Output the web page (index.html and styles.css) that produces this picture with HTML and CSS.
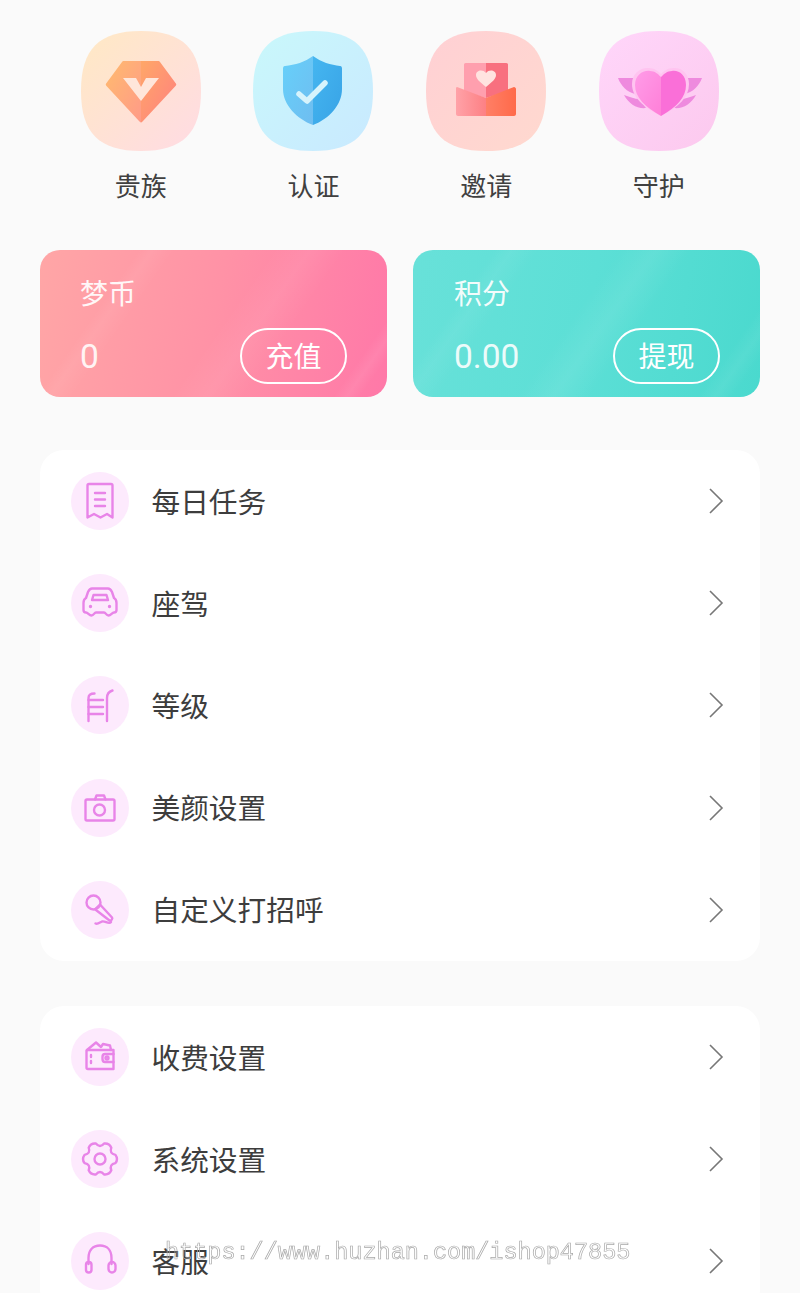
FILE: index.html
```html
<!DOCTYPE html>
<html lang="zh-CN">
<head>
  <meta charset="UTF-8">
  <title>我的</title>
  <link rel="stylesheet" href="styles.css">
</head>
<body>
<div class="page">

  <svg class="defs" width="0" height="0">
    <defs>
      <linearGradient id="t1" x1="0" y1="0" x2="1" y2="1"><stop offset="0" stop-color="#ffe9c4"/><stop offset="1" stop-color="#ffdbe4"/></linearGradient>
      <linearGradient id="t2" x1="0" y1="0" x2="1" y2="1"><stop offset="0" stop-color="#c9f8fb"/><stop offset="1" stop-color="#c9e9ff"/></linearGradient>
      <linearGradient id="t3" x1="0" y1="0" x2="1" y2="1"><stop offset="0" stop-color="#ffd0d4"/><stop offset="1" stop-color="#ffd9cf"/></linearGradient>
      <linearGradient id="t4" x1="0" y1="0" x2="1" y2="1"><stop offset="0" stop-color="#ffd6fa"/><stop offset="1" stop-color="#fcc9ee"/></linearGradient>
      <linearGradient id="d1" x1="0" y1="0" x2="1" y2="1"><stop offset="0" stop-color="#ffbb6e"/><stop offset="1" stop-color="#ff9a88"/></linearGradient>
      <linearGradient id="d2" x1="0" y1="0" x2="1" y2="1"><stop offset="0" stop-color="#ffa768"/><stop offset="1" stop-color="#ff7f80"/></linearGradient>
      <linearGradient id="s1" x1="0" y1="0" x2="1" y2="1"><stop offset="0" stop-color="#66d0fa"/><stop offset="1" stop-color="#6fbdf0"/></linearGradient>
      <linearGradient id="s2" x1="0" y1="0" x2="1" y2="1"><stop offset="0" stop-color="#45b6f0"/><stop offset="1" stop-color="#38a3e6"/></linearGradient>
      <linearGradient id="i1" x1="0" y1="0" x2="1" y2="0"><stop offset="0" stop-color="#ffa2a8"/><stop offset="1" stop-color="#fd8084"/></linearGradient>
      <linearGradient id="i2" x1="0" y1="0" x2="1" y2="0"><stop offset="0" stop-color="#ff7f66"/><stop offset="1" stop-color="#ff6a4a"/></linearGradient>
      <linearGradient id="h1" x1="0" y1="0" x2="1" y2="1"><stop offset="0" stop-color="#ff9ce8"/><stop offset="1" stop-color="#ff7fd8"/></linearGradient>
    </defs>
  </svg>

  <div class="shortcuts">
    <div class="shortcut">
      <svg class="tile" viewBox="0 0 120 120">
        <path fill="url(#t1)" d="M60 0C102 0 120 18 120 60C120 102 102 120 60 120C18 120 0 102 0 60C0 18 18 0 60 0Z"/>
        <path fill="url(#d1)" d="M60 30H43C42 30 41.500 30 41 31L25.500 52C24.500 53 24.500 54 25.500 55L58 90C59 91 60 91.500 60 91.500Z"/>
        <path fill="url(#d2)" d="M60 30H77C78 30 78.500 30 79 31L94.500 52C95.500 53 95.500 54 94.500 55L62 90C61 91 60 91.500 60 91.500Z"/>
        <path fill="#ffe6da" d="M42 47H55L60 56L65 47H78L60 70Z"/>
      </svg>
      <span>贵族</span>
    </div>
    <div class="shortcut">
      <svg class="tile" viewBox="0 0 120 120">
        <path fill="url(#t2)" d="M60 0C102 0 120 18 120 60C120 102 102 120 60 120C18 120 0 102 0 60C0 18 18 0 60 0Z"/>
        <path fill="url(#s1)" d="M60 25C52 31 42 34 32 35C30 35 30 37 30 38V58C30 74 44 88 60 94Z"/>
        <path fill="url(#s2)" d="M60 25C68 31 78 34 87 35C89 35 89 37 89 38V58C89 74 76 88 60 94Z"/>
        <path fill="none" stroke="#d6f3fc" stroke-width="5.5" stroke-linecap="round" stroke-linejoin="round" d="M46 63L54 70L72 52"/>
      </svg>
      <span>认证</span>
    </div>
    <div class="shortcut">
      <svg class="tile" viewBox="0 0 120 120">
        <path fill="url(#t3)" d="M60 0C102 0 120 18 120 60C120 102 102 120 60 120C18 120 0 102 0 60C0 18 18 0 60 0Z"/>
        <path fill="#ff9fae" d="M60 32H40C38 32 38 33 38 34V60L60 67Z"/>
        <path fill="#f8707f" d="M60 32H80C82 32 82 33 82 34V60L60 67Z"/>
        <path fill="#ffe3e0" d="M60 56C54 51 50 48 50 44C50 39 57 38 60 42C63 38 70 39 70 44C70 48 66 51 60 56Z"/>
        <path fill="url(#i1)" d="M60 67L31 56C30 56 30 57 30 58V83C30 84 31 85 32 85H60Z"/>
        <path fill="url(#i2)" d="M60 67L88 56C89 56 90 57 90 58V83C90 84 89 85 88 85H60Z"/>
      </svg>
      <span>邀请</span>
    </div>
    <div class="shortcut">
      <svg class="tile" viewBox="0 0 120 120">
        <path fill="url(#t4)" d="M60 0C102 0 120 18 120 60C120 102 102 120 60 120C18 120 0 102 0 60C0 18 18 0 60 0Z"/>
        <path fill="#ee8ade" d="M19 47H35C33 53 34 58 36 63C28 61 22 55 19 47Z"/>
        <path fill="#ee8ade" d="M25 64C31 66 36 68 40 68L47 77C38 78 30 73 25 64Z"/>
        <path fill="#ee8ade" d="M103 47H87C89 53 88 58 86 63C94 61 100 55 103 47Z"/>
        <path fill="#ee8ade" d="M97 64C91 66 86 68 82 68L75 77C84 78 92 73 97 64Z"/>
        <path fill="#ffc4f0" d="M62 85C44 76 33 66 33 53C33 42 42 36 50 37C55 37 59 40 62 43C65 40 69 37 74 37C82 36 90 42 90 53C90 66 80 76 62 85Z"/>
        <path fill="url(#h1)" d="M62 85C46 76 36 66 36 54C36 44 44 39 51 40C56 40 59 43 62 46Z"/>
        <path fill="#fa6fd8" d="M62 85C78 76 87 66 87 54C87 44 80 39 73 40C68 40 65 43 62 46Z"/>
      </svg>
      <span>守护</span>
    </div>
  </div>

  <div class="wallets">
    <div class="wallet wallet-pink">
      <div class="wallet-name">梦币</div>
      <div class="wallet-row">
        <span class="wallet-num">0</span>
        <span class="wallet-btn">充值</span>
      </div>
    </div>
    <div class="wallet wallet-teal">
      <div class="wallet-name">积分</div>
      <div class="wallet-row">
        <span class="wallet-num">0.00</span>
        <span class="wallet-btn">提现</span>
      </div>
    </div>
  </div>

  <div class="menu">
    <div class="menu-row">
      <svg class="menu-icon" viewBox="0 0 58 58">
        <path d="M18 12H40C41 12 41.500 12.500 41.500 13.500V45.500L36 42L29.500 45.500L23 42L16.500 45.500V13.500C16.500 12.500 17 12 18 12Z"/>
        <path d="M24 21H34M24 27.500H34M24 34H34"/>
      </svg>
      <span class="menu-text">每日任务</span>
      <svg class="chevron" viewBox="0 0 16 26"><path d="M2 1L14 13L2 25"/></svg>
    </div>
    <div class="menu-row">
      <svg class="menu-icon" viewBox="0 0 58 58">
        <path d="M21 14.500H37C39 14.500 40 16 41 18L43 24C45 25 45.500 27 45.500 29V36C45.500 38 44.500 38.500 43 38.500C41 38.500 40 41.500 37.500 41.500C35 41.500 35 38.500 33 38.500H25C23 38.500 23 41.500 20.500 41.500C18 41.500 17 38.500 15 38.500C13.500 38.500 12.500 38 12.500 36V29C12.500 27 13 25 15 24L17 18C18 16 19 14.500 21 14.500Z"/>
        <path d="M22.500 21H35.500L37 26H21Z"/>
        <path class="dot" d="M19.500 32.500h.01M38.500 32.500h.01"/>
      </svg>
      <span class="menu-text">座驾</span>
      <svg class="chevron" viewBox="0 0 16 26"><path d="M2 1L14 13L2 25"/></svg>
    </div>
    <div class="menu-row">
      <svg class="menu-icon" viewBox="0 0 58 58">
        <path d="M17.500 45V22C17.500 19 20 17.500 23.500 17.500"/>
        <path d="M36 45V22C36 18 38 15.500 41.500 14.500"/>
        <path d="M17.500 24H32M17.500 31H32M17.500 38H32"/>
      </svg>
      <span class="menu-text">等级</span>
      <svg class="chevron" viewBox="0 0 16 26"><path d="M2 1L14 13L2 25"/></svg>
    </div>
    <div class="menu-row">
      <svg class="menu-icon" viewBox="0 0 58 58">
        <path d="M16 20.500H42C43 20.500 43.500 21 43.500 22V40C43.500 41 43 41.500 42 41.500H16C15 41.500 14.500 41 14.500 40V22C14.500 21 15 20.500 16 20.500Z"/>
        <path d="M24 20.500L25.500 16.500H33L34.500 20.500"/>
        <circle cx="28.500" cy="31" r="5.500"/>
      </svg>
      <span class="menu-text">美颜设置</span>
      <svg class="chevron" viewBox="0 0 16 26"><path d="M2 1L14 13L2 25"/></svg>
    </div>
    <div class="menu-row">
      <svg class="menu-icon" viewBox="0 0 58 58">
        <circle cx="22.500" cy="21.500" r="7"/>
        <path d="M24 28.300L29 23.500L41 36.500C42 38 40 40 38.500 39.500Z"/>
        <path d="M40 41C38 44 34 39.500 31 40.500C28.500 41.500 27 43.500 24.500 42.500"/>
      </svg>
      <span class="menu-text">自定义打招呼</span>
      <svg class="chevron" viewBox="0 0 16 26"><path d="M2 1L14 13L2 25"/></svg>
    </div>
  </div>

  <div class="menu menu-second">
    <div class="menu-row">
      <svg class="menu-icon" viewBox="0 0 58 58">
        <path d="M16 22H42.500V41H17C16 41 15.500 40.500 15.500 39.500V22.500Z"/>
        <path d="M16 22L25 14.500L30 19L32 16L39 17.500L40 22"/>
        <path d="M42.500 26H34C32 26 31.500 27 31.500 29V31C31.500 33 32 34 34 34H42.500"/>
        <circle cx="36" cy="30" r="1.500"/>
        <path d="M20 27V29M20 33V35"/>
      </svg>
      <span class="menu-text">收费设置</span>
      <svg class="chevron" viewBox="0 0 16 26"><path d="M2 1L14 13L2 25"/></svg>
    </div>
    <div class="menu-row">
      <svg class="menu-icon" viewBox="0 0 58 58">
        <path d="M44.450 24.860Q47.500 29 44.450 33.140Q38.090 34.250 40.310 40.310Q38.250 45.020 33.140 44.450Q29 39.500 24.860 44.450Q19.750 45.020 17.690 40.310Q19.910 34.250 13.550 33.140Q10.500 29 13.550 24.860Q19.910 23.750 17.690 17.690Q19.750 12.980 24.860 13.550Q29 18.500 33.140 13.550Q38.250 12.980 40.310 17.690Q38.090 23.750 44.450 24.860Z"/>
        <circle cx="29" cy="29" r="5.500"/>
      </svg>
      <span class="menu-text">系统设置</span>
      <svg class="chevron" viewBox="0 0 16 26"><path d="M2 1L14 13L2 25"/></svg>
    </div>
    <div class="menu-row">
      <svg class="menu-icon" viewBox="0 0 58 58">
        <path d="M17.500 32V26C17.500 18 22 13.500 29 13.500C36 13.500 40.500 18 40.500 26V32"/>
        <rect x="15" y="30" width="5.500" height="10.500" rx="2.700"/>
        <rect x="37.500" y="30" width="7" height="10.500" rx="3.500"/>
      </svg>
      <span class="menu-text">客服</span>
      <svg class="chevron" viewBox="0 0 16 26"><path d="M2 1L14 13L2 25"/></svg>
    </div>
  </div>

  <div class="watermark">https://www.huzhan.com/ishop47855</div>
</div>
</body>
</html>
```

FILE: styles.css
```css
body {
  margin: 0;
  background: #fafafa;
  font-family: "Noto Sans CJK SC", "Noto Sans", sans-serif;
}

.page {
  position: relative;
  height: 1293px;
  overflow: hidden;
}

.defs {
  position: absolute;
}

/* top shortcuts */
.shortcuts {
  display: grid;
  grid-template-columns: repeat(4, 172.67px);
  padding: 31px 0 0 54.5px;
}

.shortcut {
  display: flex;
  flex-direction: column;
  align-items: center;
  gap: 19px;
  font-size: 26px;
  line-height: 30px;
  color: #404040;
}

.tile {
  width: 120px;
  height: 120px;
  display: block;
}

/* wallet cards */
.wallets {
  display: flex;
  gap: 26px;
  margin: 50px 40px 0;
}

.wallet {
  width: 347px;
  height: 147px;
  box-sizing: border-box;
  padding: 27px 40px 13px;
  border-radius: 20px;
  color: #fff;
}

.wallet-pink {
  background:
    linear-gradient(125deg, transparent 22%, rgba(255,255,255,.05) 25%, transparent 30%, transparent 52%, rgba(255,255,255,.06) 60%, transparent 68%, transparent 88%, rgba(255,255,255,.07) 91%, transparent 94%),
    linear-gradient(100deg, #ffa6a6 0%, #ff92a6 50%, #ff78a8 100%);
}

.wallet-teal {
  padding-left: 41px;
  background:
    linear-gradient(125deg, transparent 18%, rgba(255,255,255,.05) 22%, transparent 28%, transparent 46%, rgba(255,255,255,.07) 54%, transparent 62%, transparent 86%, rgba(255,255,255,.06) 90%, transparent 94%),
    linear-gradient(100deg, #68e1d9 0%, #5cdfd6 50%, #4ad9ce 100%);
}

.wallet-name {
  font-size: 28px;
  line-height: 30px;
  opacity: .92;
}

.wallet-row {
  display: flex;
  justify-content: space-between;
  align-items: center;
  margin-top: 21px;
}

.wallet-num {
  font-family: Roboto, sans-serif;
  font-size: 33.5px;
  opacity: .88;
}

.wallet-btn {
  width: 107px;
  height: 56px;
  box-sizing: border-box;
  border: 2px solid #fff;
  border-radius: 28px;
  font-size: 28px;
  line-height: 50px;
  text-align: center;
}

/* menu lists */
.menu {
  margin: 53px 40px 0;
  background: #fff;
  border-radius: 24px;
}

.menu-second {
  margin-top: 45px;
}

.menu-row {
  display: flex;
  align-items: center;
  height: 102.2px;
  padding: 0 36px 0 31px;
}

.menu-icon {
  width: 58px;
  height: 58px;
  flex: none;
  border-radius: 50%;
  background: #fdeafd;
  fill: none;
  stroke: #e884e8;
  stroke-width: 2.4;
  stroke-linecap: round;
  stroke-linejoin: round;
}

.menu-icon .dot {
  stroke-width: 3.4;
}

.menu-text {
  flex: 1;
  margin-left: 22.5px;
  padding-bottom: 2px;
  font-size: 28.7px;
  color: #3d3d3d;
}

.chevron {
  width: 16px;
  height: 26px;
  flex: none;
  fill: none;
  stroke: #777;
  stroke-width: 1.6;
}

.watermark {
  position: absolute;
  left: 165px;
  top: 1238px;
  font-family: "Liberation Mono", monospace;
  font-size: 23.5px;
  line-height: 30px;
  white-space: nowrap;
  color: transparent;
  will-change: transform;
  -webkit-text-stroke: 0.7px #a8a8a8;
}
```
